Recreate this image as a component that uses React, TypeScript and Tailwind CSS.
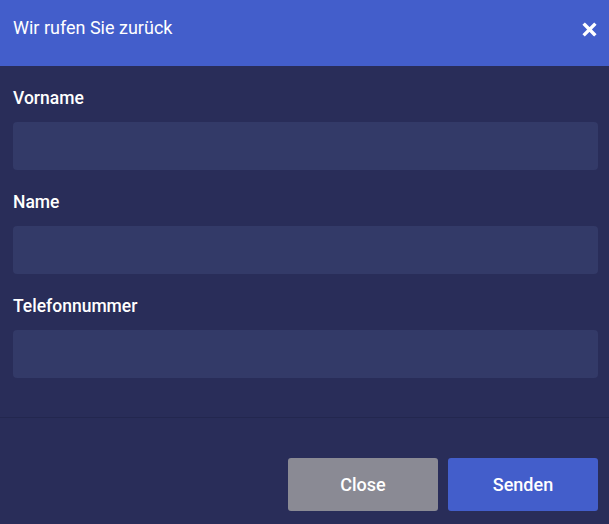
export default function App() {
  const fields = ["Vorname", "Name", "Telefonnummer"];
  return (
    <div className="flex min-h-[524px] w-full flex-col bg-[#292d59] font-['Roboto',sans-serif] text-white">
      <div className="flex h-[66px] items-start justify-between bg-[#435ecb] pt-[16px] pr-[12px] pl-[13px]">
        <h2 className="text-[18px] leading-6">Wir rufen Sie zurück</h2>
        <button className="mt-[6px] text-white">
          <svg width="15" height="15" viewBox="0 0 16 16">
            <path d="M3 3 L13 13 M13 3 L3 13" stroke="white" strokeWidth="3.6" strokeLinecap="square" />
          </svg>
        </button>
      </div>
      <div className="flex flex-col gap-5 border-b border-[#23274f] pt-5 pr-[11px] pb-[39px] pl-[13px]">
        {fields.map((f) => (
          <div key={f} className="flex flex-col gap-3">
            <label className="text-[17.5px] leading-6 font-medium">{f}</label>
            <input className="h-12 w-full rounded-[4px] bg-[#333a68] px-3 outline-none" />
          </div>
        ))}
      </div>
      <div className="flex justify-end gap-[10px] px-[11px] pt-10 pb-[13px]">
        <button className="h-[53px] w-[150px] rounded-[3px] bg-[#8a8a94] text-[18px] font-medium">Close</button>
        <button className="h-[53px] w-[150px] rounded-[3px] bg-[#435ecb] text-[18px] font-medium">Senden</button>
      </div>
    </div>
  );
}
